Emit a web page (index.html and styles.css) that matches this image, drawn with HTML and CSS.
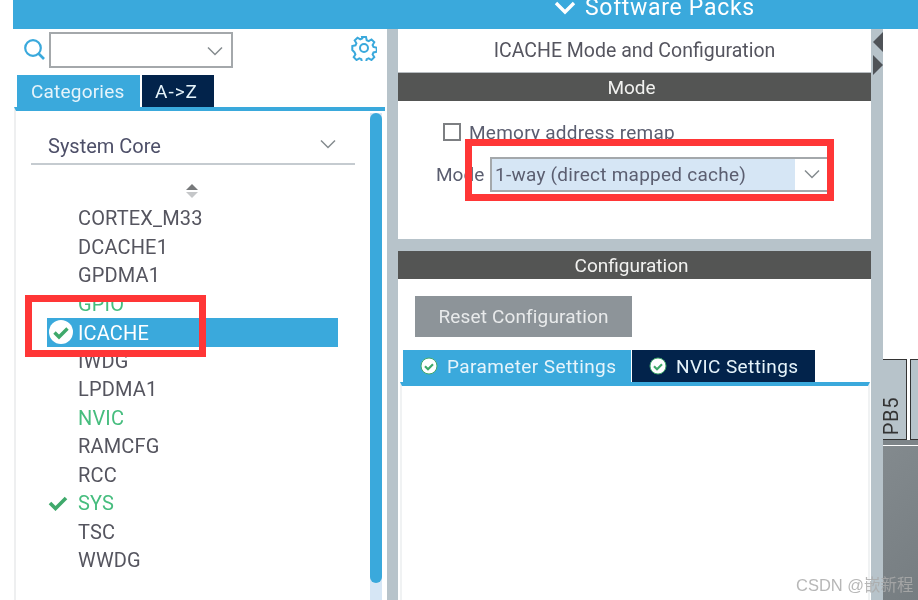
FILE: index.html
```html
<!DOCTYPE html>
<html lang="en">
<head>
<meta charset="utf-8">
<title>ICACHE Mode and Configuration</title>
<link rel="stylesheet" href="styles.css">
</head>
<body>
<div class="app">
  <header class="topbar">
    <svg class="top-chevron" width="22" height="14" viewBox="0 0 22 14"><path d="M2 2l9 9 9-9" fill="none" stroke="#fff" stroke-width="3.4"/></svg>
    <span class="top-title">Software Packs</span>
  </header>
  <div class="main">
    <aside class="left">
      <div class="search-row">
        <svg class="search-icon" width="24" height="26" viewBox="0 0 24 26"><circle cx="10" cy="10" r="7.800" fill="none" stroke="#3aa9dc" stroke-width="2.200"/><path d="M15.500 15.500l5.500 5.500" stroke="#3aa9dc" stroke-width="2.600" fill="none"/></svg>
        <div class="search-box">
          <svg width="16" height="10" viewBox="0 0 16 10"><path d="M1 1.500l7 7 7-7" fill="none" stroke="#858b8f" stroke-width="1.500"/></svg>
        </div>
        <svg class="gear" width="26" height="26" viewBox="0 0 26 26"><g fill="none" stroke="#3aa9dc" stroke-width="2"><circle cx="13" cy="13" r="4"/><path d="M11 2h4l.7 3.200 2 .9 2.800-1.700 2.800 2.800-1.700 2.800.9 2 3.200.7v4l-3.200.7-.9 2 1.700 2.800-2.800 2.800-2.800-1.700-2 .9-.7 3.200h-4l-.7-3.200-2-.9-2.800 1.700-2.800-2.800 1.700-2.800-.9-2L1.300 15v-4l3.200-.7.9-2-1.700-2.800 2.800-2.800 2.800 1.700 2-.9z"/></g></svg>
      </div>
      <div class="left-tabs">
        <div class="tab tab-active tab-cat">Categories</div>
        <div class="tab tab-dark tab-az">A-&gt;Z</div>
      </div>
      <div class="left-panel">
        <div class="left-content">
          <div class="cat-head">
            <span>System Core</span>
            <svg width="16" height="10" viewBox="0 0 16 10"><path d="M1 1.500l7 7 7-7" fill="none" stroke="#858b8f" stroke-width="1.500"/></svg>
          </div>
          <div class="sorter"><i class="sort-up"></i><i class="sort-down"></i></div>
          <ul class="items">
            <li>CORTEX_M33</li>
            <li>DCACHE1</li>
            <li>GPDMA1</li>
            <li class="green">GPIO</li>
            <li class="selected">
              <svg class="sel-check" width="26" height="26" viewBox="0 0 26 26"><circle cx="13" cy="13" r="12" fill="#fff"/><path d="M6.500 13.500l4.500 4.500 8.500-8.500" fill="none" stroke="#3fa96b" stroke-width="3.400"/></svg>
              ICACHE
            </li>
            <li>IWDG</li>
            <li>LPDMA1</li>
            <li class="green">NVIC</li>
            <li>RAMCFG</li>
            <li>RCC</li>
            <li class="green">
              <svg class="sys-check" width="20" height="16" viewBox="0 0 20 16"><path d="M2 8l5.500 5.500L18 3" fill="none" stroke="#3fa96b" stroke-width="3.600"/></svg>
              SYS
            </li>
            <li>TSC</li>
            <li>WWDG</li>
          </ul>
        </div>
        <div class="scroll-track"><div class="scroll-thumb"></div></div>
      </div>
    </aside>
    <div class="gutter"></div>
    <section class="mid">
      <h1 class="mid-title">ICACHE Mode and Configuration</h1>
      <div class="bar">Mode</div>
      <div class="mode-body">
        <label class="check-row"><span class="checkbox"></span>Memory address remap</label>
        <div class="select-row">
          <span class="select-label">Mode</span>
          <div class="select">
            <span class="select-value">1-way (direct mapped cache)</span>
            <span class="select-arrow"><svg width="16" height="10" viewBox="0 0 16 10"><path d="M1 1.500l7 7 7-7" fill="none" stroke="#858b8f" stroke-width="1.500"/></svg></span>
          </div>
        </div>
      </div>
      <div class="mid-gap"></div>
      <div class="bar">Configuration</div>
      <div class="config-body">
        <div class="reset-btn">Reset Configuration</div>
        <div class="config-tabs">
          <div class="tab tab-active tab-param">
            <svg width="18" height="18" viewBox="0 0 18 18"><circle cx="9" cy="9" r="8" fill="#fff" stroke="#3fa96b" stroke-width="1"/><path d="M5 9.200l3 3 5-5" fill="none" stroke="#3fa96b" stroke-width="2.200"/></svg>
            Parameter Settings
          </div>
          <div class="tab tab-dark tab-nvic">
            <svg width="18" height="18" viewBox="0 0 18 18"><circle cx="9" cy="9" r="8" fill="#fff" stroke="#3fa96b" stroke-width="1"/><path d="M5 9.200l3 3 5-5" fill="none" stroke="#3fa96b" stroke-width="2.200"/></svg>
            NVIC Settings
          </div>
        </div>
        <div class="config-panel"></div>
      </div>
    </section>
    <div class="gutter gutter-arrows">
      <i class="tri-left"></i>
      <i class="tri-right"></i>
    </div>
    <section class="canvas">
      <div class="canvas-blank"></div>
      <div class="pins">
        <div class="pin"><span>PB5</span></div>
        <div class="pin pin-next"></div>
      </div>
      <div class="chip-edge"></div>
      <div class="chip"></div>
    </section>
  </div>
  <div class="red-box red-box-item"></div>
  <div class="red-box red-box-mode"></div>
  <div class="watermark">CSDN @嵌新程</div>
</div>
</body>
</html>
```
FILE: styles.css
```css
* { box-sizing: border-box; }
html, body { margin: 0; padding: 0; background: #fff; }
body { font-family: Roboto, "Liberation Sans", sans-serif; color: #55555f; }
.app { position: relative; width: 918px; height: 600px; overflow: hidden; padding-left: 13px; display: flex; flex-direction: column; }

.topbar { height: 29px; flex: none; background: #3aa9dc; display: flex; align-items: flex-start; padding-left: 541px; overflow: hidden; color: #fff; filter: blur(0.4px); }
.top-chevron { margin-top: 1px; flex: none; }
.top-title { margin-left: 9px; margin-top: -6px; font-size: 23px; line-height: 28px; letter-spacing: 0.7px; white-space: nowrap; }

.main { flex: 1; display: flex; min-height: 0; filter: blur(0.4px); }

.left { width: 374px; flex: none; display: flex; flex-direction: column; }
.search-row { height: 46px; flex: none; display: flex; align-items: flex-start; padding: 3px 0 0 10px; }
.search-icon { margin-top: 6px; flex: none; }
.search-box { width: 184px; height: 36px; margin-left: 2px; border: 2px solid #a4a8ab; display: flex; align-items: center; justify-content: flex-end; padding: 2px 8px 0 0; flex: none; }
.gear { margin: 3px 0 0 118px; flex: none; }

.left-tabs { height: 32px; flex: none; display: flex; gap: 2px; padding-left: 4px; }
.tab { color: #e6f4fb; display: flex; align-items: center; font-size: 19px; letter-spacing: 0.4px; white-space: nowrap; }
.tab-active { background: #3aa9dc; }
.tab-dark { background: #02234b; }
.tab-cat { width: 123px; padding-left: 14px; letter-spacing: 0.2px; }
.tab-az { width: 72px; padding-left: 13px; letter-spacing: 1px; }

.left-panel { flex: 1; min-height: 0; margin: 0 2px 0 1px; border-top: 4px solid #3aa9dc; border-left: 2px solid #eeeff0; display: flex; }
.left-content { flex: 1; padding: 0 15px; min-width: 0; }
.cat-head { height: 54px; width: 324px; border-bottom: 2px solid #c5cbd0; display: flex; align-items: flex-end; justify-content: space-between; padding: 0 19px 5px 17px; font-size: 20px; color: #4d4f68; }
.cat-head svg { margin-bottom: 9.500px; }
.sorter { height: 39px; width: 322px; display: flex; flex-direction: column; align-items: center; padding-top: 19px; gap: 2px; }
.sort-up { width: 0; height: 0; border: 6px solid transparent; border-top: 0; border-bottom: 6px solid #77797b; }
.sort-down { width: 0; height: 0; border: 6px solid transparent; border-bottom: 0; border-top: 6px solid #c5c7c9; }
.items { list-style: none; margin: 0; padding: 0; width: 323px; }
.items li { position: relative; height: 28.5px; line-height: 28.5px; font-size: 20px; letter-spacing: 0.15px; padding-left: 47px; white-space: nowrap; }
.items .green { color: #46bd7e; }
.items .selected { background: #3aa9dc; color: #fff; margin-left: 16px; padding-left: 31px; width: 291px; line-height: 30px; }
.sel-check { position: absolute; left: 1px; top: 1px; }
.sys-check { position: absolute; left: 17px; top: 6px; }
.scroll-track { width: 12px; flex: none; margin: 2px 3px 0 0; background: #d6e6f5; }
.scroll-thumb { height: 470px; border-radius: 6px; background: #3aa9dc; }

.gutter { width: 11px; flex: none; background: #b7c3ca; }
.gutter-arrows { width: 12px; display: flex; flex-direction: column; padding: 3px 0 0 2px; gap: 3px; }
.tri-left { width: 0; height: 0; border: 10px solid transparent; border-left: 0; border-right: 10px solid #4f5358; }
.tri-right { width: 0; height: 0; border: 10.500px solid transparent; border-right: 0; border-left: 10px solid #4f5358; }

.mid { width: 473px; flex: none; display: flex; flex-direction: column; }
.mid-title { margin: 0; height: 44px; flex: none; display: flex; align-items: center; justify-content: center; font-size: 19.500px; font-weight: 400; color: #55555f; border-bottom: 1px solid #b7bcc0; }
.bar { height: 28px; flex: none; background: #545554; color: #f2f2f0; display: flex; align-items: center; justify-content: center; font-size: 19px; padding-right: 6px; }
.mode-body { height: 138px; flex: none; padding: 19px 0 0 38px; }
.check-row { display: flex; align-items: center; font-size: 19px; letter-spacing: 0.25px; height: 24px; color: #5b5e70; }
.checkbox { width: 18px; height: 18px; border: 2px solid #7d7f82; margin: 0 8px 0 7px; flex: none; }
.select-row { display: flex; align-items: center; margin-top: 13px; height: 34px; }
.select-label { font-size: 19px; width: 54px; flex: none; color: #5b5e70; }
.select { width: 340px; height: 35px; border: 2px solid #a4a8ab; display: flex; flex: none; }
.select-value { width: 303px; flex: none; background: #d6e6f5; font-size: 19px; letter-spacing: 0.25px; line-height: 31px; padding-left: 3px; color: #5b5e70; white-space: nowrap; }
.select-arrow { flex: 1; display: flex; align-items: center; justify-content: center; }
.mid-gap { height: 12px; flex: none; background: #b7c3ca; }
.config-body { flex: 1; min-height: 0; display: flex; flex-direction: column; padding-top: 17px; }
.reset-btn { margin-left: 17px; width: 217px; height: 41px; flex: none; background: #8d9499; color: #e8eaeb; display: flex; align-items: center; justify-content: center; font-size: 19px; letter-spacing: 0.15px; }
.config-tabs { margin: 13px 0 0 5px; height: 32px; flex: none; display: flex; gap: 1px; }
.tab svg { margin-right: 9px; flex: none; }
.tab-param { width: 228px; padding-left: 17px; }
.tab-nvic { width: 183px; padding-left: 17px; }
.config-panel { flex: 1; margin: 0 1px 0 2px; border-top: 4px solid #3aa9dc; border-left: 2px solid #f0f2f3; border-right: 2px solid #f0f2f3; }

.canvas { flex: 1; min-width: 0; display: flex; flex-direction: column; }
.canvas-blank { height: 330px; flex: none; }
.pins { height: 81px; flex: none; display: flex; gap: 3px; }
.pin { width: 24px; flex: none; background: #b7c3ca; border-top: 1px solid #333; border-bottom: 1px solid #333; border-right: 1px solid #333; position: relative; }
.pin span { position: absolute; left: -3px; bottom: 4px; font-size: 20px; letter-spacing: 0.6px; line-height: 22px; color: #333; writing-mode: vertical-rl; transform: rotate(180deg); }
.pin-next { border-left: 1px solid #333; border-right: 0; flex: 1; }
.chip-edge { height: 6px; flex: none; background: #7d8488; border-bottom: 1px solid #fff; }
.chip { flex: 1; background: linear-gradient(135deg, #838a8e, #767d81); }

.red-box { position: absolute; border: 7px solid #ff3636; }
.red-box-item { left: 25px; top: 295px; width: 181px; height: 62px; }
.red-box-mode { left: 465px; top: 139px; width: 369px; height: 62px; }
.watermark { position: absolute; left: 796px; top: 574px; font-size: 16.500px; line-height: 22px; color: rgba(170, 170, 170, 0.85); font-family: "Liberation Sans", "Noto Sans CJK SC", sans-serif; white-space: nowrap; filter: blur(0.3px); }
```
